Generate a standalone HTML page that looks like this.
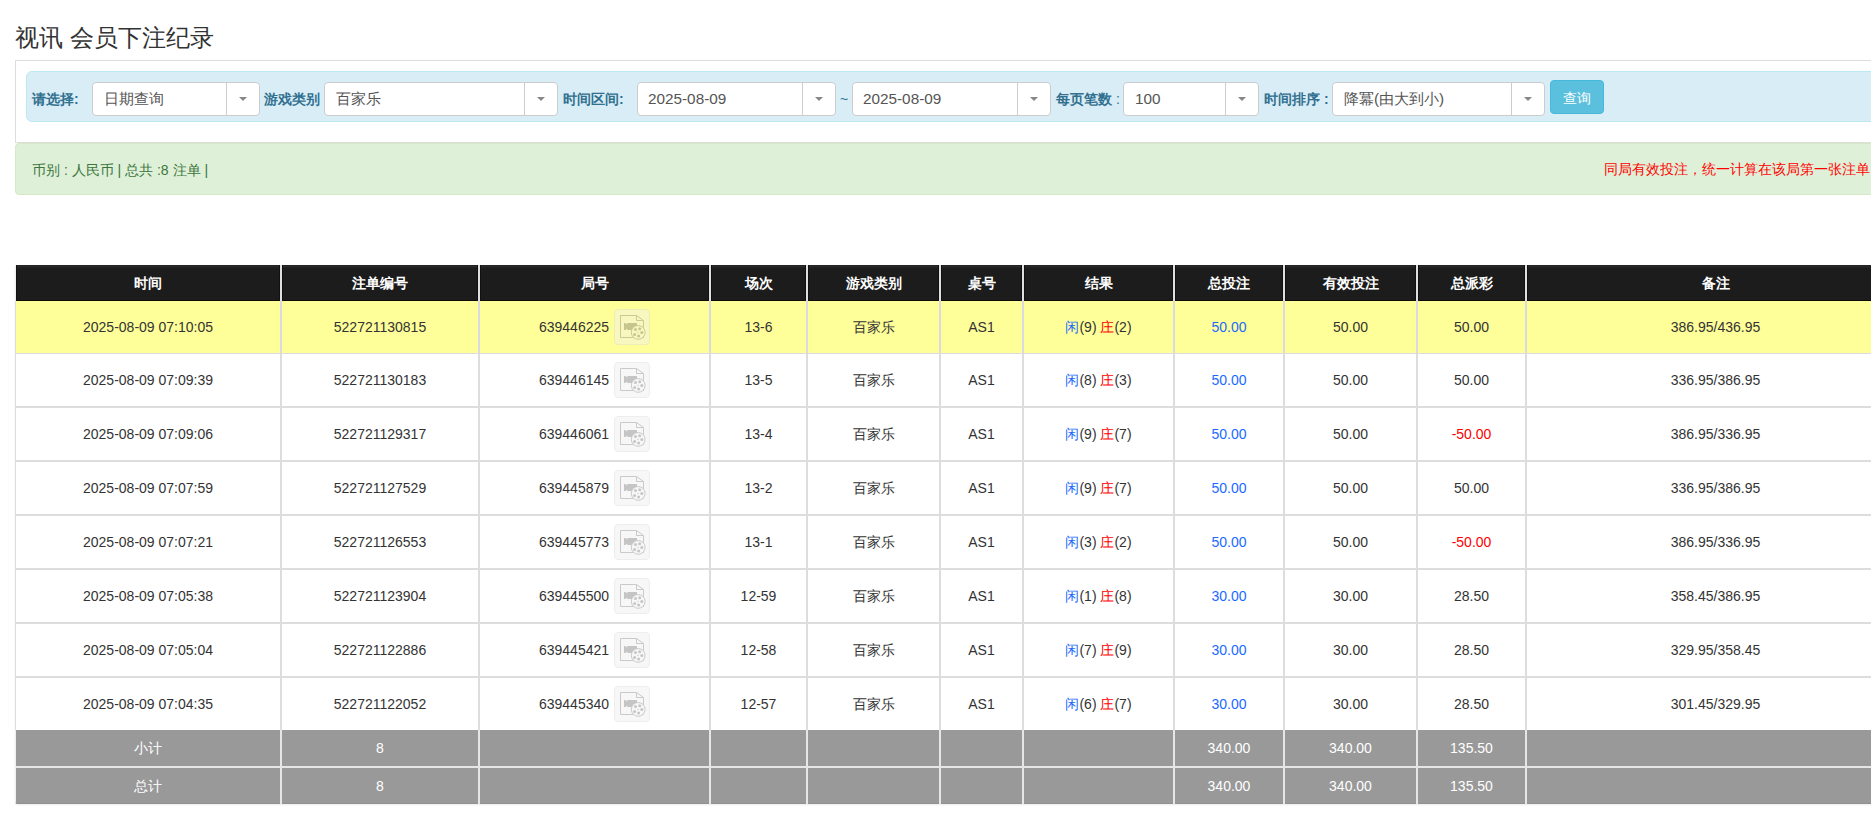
<!DOCTYPE html>
<html><head><meta charset="utf-8">
<style>
*{box-sizing:border-box;margin:0;padding:0}
html,body{width:1871px;height:822px;overflow:hidden;background:#fff}
body{font-family:"Liberation Sans",sans-serif;font-size:14px;color:#333;position:relative}
.abs{position:absolute}
.title{left:15px;top:23px;font-size:24px;line-height:30px;color:#333;white-space:nowrap}
.panel{left:15px;top:60px;width:1900px;height:83px;border:1px solid #ddd;border-right:none}
.info{left:26px;top:71px;width:1900px;height:51px;background:#d9edf7;border:1px solid #bce8f1;border-radius:6px}
.lbl{position:absolute;top:90px;font-size:14px;line-height:18px;font-weight:bold;color:#31708f;white-space:nowrap}
.lbl i{font-style:normal;font-weight:normal}
.sel{position:absolute;top:82px;height:34px;background:#fff;border:1px solid #ccc;border-radius:4px}
.sel .t{position:absolute;left:11px;top:7px;font-size:15.3px;line-height:18px;color:#555;white-space:nowrap}
.sel .sep{position:absolute;right:32px;top:0;bottom:0;border-left:1px solid #ccc}
.sel .car{position:absolute;right:12px;top:14px;width:0;height:0;border-left:4px solid transparent;border-right:4px solid transparent;border-top:4px solid #888}
.btn{left:1550px;top:80px;width:54px;height:34px;background:#5bc0de;border:1px solid #46b8da;border-radius:4px;color:#fff;font-size:14px;line-height:34px;text-align:center}
.succ{left:15px;top:143px;width:1900px;height:52px;background:#dff0d8;border:1px solid #d6e9c6;border-radius:4px}
.succ .l{position:absolute;left:16px;top:17px;font-size:14px;line-height:18px;color:#3c763d;white-space:nowrap}
.succ .r{position:absolute;left:1588px;top:16px;font-size:14px;line-height:18px;color:#f00;white-space:nowrap}
.tbl{position:absolute;left:15px;top:265px;width:1889px;height:539px;border-radius:0 0 3px 3px;overflow:hidden;background:#fff;box-shadow:0 1px 2px rgba(0,0,0,.08)}
.tbl div{position:absolute}
.hdr{left:0;width:1889px;background:#1c1c1c}
.ybg{left:0;width:1889px;background:#ffff99}
.fbg{left:0;width:1889px;background:#999}
.hl{left:0;width:1889px;background:#ddd}
.vl{width:2px;background:#ddd}
.vlh{width:2px;background:#e0e0e0}
.vly{width:2px;background:#dadae0}
.vlf{width:2px;background:#e6e6e6}
.c{position:absolute;text-align:center;white-space:nowrap;font-size:14px;color:#333}
.th{color:#fff;font-weight:bold}
.ft{color:#fff}
.blue{color:#1a6aff}
.red{color:#f00}
.ico{display:inline-block;vertical-align:middle;width:36px;height:36px;margin-left:5px;border:1px solid #d9d9d9;border-radius:4px;background:#efefef;opacity:.45;position:relative;top:-1px}
.ico svg{position:absolute;left:-1px;top:-1px}
</style></head><body>
<div class="abs title">视讯 会员下注纪录</div>
<div class="abs panel"></div>
<div class="abs info"></div>
<div class="lbl" style="left:32px">请选择:</div>
<div class="sel" style="left:92px;width:168px"><span class="t">日期查询</span><span class="sep"></span><span class="car"></span></div>
<div class="lbl" style="left:264px">游戏类别</div>
<div class="sel" style="left:324px;width:234px"><span class="t">百家乐</span><span class="sep"></span><span class="car"></span></div>
<div class="lbl" style="left:563px">时间区间:</div>
<div class="sel" style="left:637px;width:199px"><span class="t" style="left:10px">2025-08-09</span><span class="sep"></span><span class="car"></span></div>
<div class="lbl" style="left:840px;font-weight:normal">~</div>
<div class="sel" style="left:852px;width:199px"><span class="t" style="left:10px">2025-08-09</span><span class="sep"></span><span class="car"></span></div>
<div class="lbl" style="left:1056px">每页笔数<i> :</i></div>
<div class="sel" style="left:1123px;width:136px"><span class="t" style="left:11px">100</span><span class="sep"></span><span class="car"></span></div>
<div class="lbl" style="left:1264px">时间排序 :</div>
<div class="sel" style="left:1332px;width:213px"><span class="t">降冪(由大到小)</span><span class="sep"></span><span class="car"></span></div>
<div class="abs btn">查询</div>
<div class="abs succ"><span class="l">币别 : 人民币 | 总共 :8 注单 |</span><span class="r">同局有效投注，统一计算在该局第一张注单</span></div>
<div class="tbl">
<div class="hdr" style="top:0;height:36px"></div>
<div style="left:0;top:0;width:1889px;height:3px;background:linear-gradient(#1e1e1e,#2a2a2a 40%,#1e1e1e)"></div>
<div style="left:0;top:35px;width:1889px;height:1px;background:#0c0c0c"></div>
<div style="left:1px;top:0;width:1px;height:36px;background:#111"></div>
<div style="left:0;top:0;width:1px;height:36px;background:#eee"></div>
<div class="ybg" style="top:36px;height:52px"></div>
<div class="hl" style="top:88px;height:1px;background:#dadae0"></div>
<div class="hl" style="top:141px;height:2px"></div>
<div class="hl" style="top:195px;height:2px"></div>
<div class="hl" style="top:249px;height:2px"></div>
<div class="hl" style="top:303px;height:2px"></div>
<div class="hl" style="top:357px;height:2px"></div>
<div class="hl" style="top:411px;height:2px"></div>
<div class="fbg" style="top:465px;height:74px"></div>
<div class="hl" style="top:501px;height:2px;background:#e6e6e6"></div>
<div style="left:0;top:538px;width:1889px;height:1px;background:#909090"></div>
<div style="left:0;top:465px;width:1px;height:74px;background:#eee"></div>
<div class="vl" style="left:0;width:1px;top:36px;height:429px"></div>
<div class="vlh" style="left:265px;top:0;height:36px"></div>
<div style="left:264px;top:0;width:1px;height:36px;background:#111"></div>
<div style="left:267px;top:0;width:1px;height:36px;background:#111"></div>
<div class="vly" style="left:265px;top:36px;height:53px"></div>
<div class="vl" style="left:265px;top:89px;height:376px"></div>
<div class="vlf" style="left:265px;top:465px;height:74px"></div>
<div class="vlh" style="left:463px;top:0;height:36px"></div>
<div style="left:462px;top:0;width:1px;height:36px;background:#111"></div>
<div style="left:465px;top:0;width:1px;height:36px;background:#111"></div>
<div class="vly" style="left:463px;top:36px;height:53px"></div>
<div class="vl" style="left:463px;top:89px;height:376px"></div>
<div class="vlf" style="left:463px;top:465px;height:74px"></div>
<div class="vlh" style="left:694px;top:0;height:36px"></div>
<div style="left:693px;top:0;width:1px;height:36px;background:#111"></div>
<div style="left:696px;top:0;width:1px;height:36px;background:#111"></div>
<div class="vly" style="left:694px;top:36px;height:53px"></div>
<div class="vl" style="left:694px;top:89px;height:376px"></div>
<div class="vlf" style="left:694px;top:465px;height:74px"></div>
<div class="vlh" style="left:791px;top:0;height:36px"></div>
<div style="left:790px;top:0;width:1px;height:36px;background:#111"></div>
<div style="left:793px;top:0;width:1px;height:36px;background:#111"></div>
<div class="vly" style="left:791px;top:36px;height:53px"></div>
<div class="vl" style="left:791px;top:89px;height:376px"></div>
<div class="vlf" style="left:791px;top:465px;height:74px"></div>
<div class="vlh" style="left:924px;top:0;height:36px"></div>
<div style="left:923px;top:0;width:1px;height:36px;background:#111"></div>
<div style="left:926px;top:0;width:1px;height:36px;background:#111"></div>
<div class="vly" style="left:924px;top:36px;height:53px"></div>
<div class="vl" style="left:924px;top:89px;height:376px"></div>
<div class="vlf" style="left:924px;top:465px;height:74px"></div>
<div class="vlh" style="left:1007px;top:0;height:36px"></div>
<div style="left:1006px;top:0;width:1px;height:36px;background:#111"></div>
<div style="left:1009px;top:0;width:1px;height:36px;background:#111"></div>
<div class="vly" style="left:1007px;top:36px;height:53px"></div>
<div class="vl" style="left:1007px;top:89px;height:376px"></div>
<div class="vlf" style="left:1007px;top:465px;height:74px"></div>
<div class="vlh" style="left:1158px;top:0;height:36px"></div>
<div style="left:1157px;top:0;width:1px;height:36px;background:#111"></div>
<div style="left:1160px;top:0;width:1px;height:36px;background:#111"></div>
<div class="vly" style="left:1158px;top:36px;height:53px"></div>
<div class="vl" style="left:1158px;top:89px;height:376px"></div>
<div class="vlf" style="left:1158px;top:465px;height:74px"></div>
<div class="vlh" style="left:1268px;top:0;height:36px"></div>
<div style="left:1267px;top:0;width:1px;height:36px;background:#111"></div>
<div style="left:1270px;top:0;width:1px;height:36px;background:#111"></div>
<div class="vly" style="left:1268px;top:36px;height:53px"></div>
<div class="vl" style="left:1268px;top:89px;height:376px"></div>
<div class="vlf" style="left:1268px;top:465px;height:74px"></div>
<div class="vlh" style="left:1401px;top:0;height:36px"></div>
<div style="left:1400px;top:0;width:1px;height:36px;background:#111"></div>
<div style="left:1403px;top:0;width:1px;height:36px;background:#111"></div>
<div class="vly" style="left:1401px;top:36px;height:53px"></div>
<div class="vl" style="left:1401px;top:89px;height:376px"></div>
<div class="vlf" style="left:1401px;top:465px;height:74px"></div>
<div class="vlh" style="left:1510px;top:0;height:36px"></div>
<div style="left:1509px;top:0;width:1px;height:36px;background:#111"></div>
<div style="left:1512px;top:0;width:1px;height:36px;background:#111"></div>
<div class="vly" style="left:1510px;top:36px;height:53px"></div>
<div class="vl" style="left:1510px;top:89px;height:376px"></div>
<div class="vlf" style="left:1510px;top:465px;height:74px"></div>
</div>
<div class="c th" style="left:16px;width:264px;top:265px;height:36px;line-height:36px">时间</div>
<div class="c th" style="left:282px;width:196px;top:265px;height:36px;line-height:36px">注单编号</div>
<div class="c th" style="left:480px;width:229px;top:265px;height:36px;line-height:36px">局号</div>
<div class="c th" style="left:711px;width:95px;top:265px;height:36px;line-height:36px">场次</div>
<div class="c th" style="left:808px;width:131px;top:265px;height:36px;line-height:36px">游戏类别</div>
<div class="c th" style="left:941px;width:81px;top:265px;height:36px;line-height:36px">桌号</div>
<div class="c th" style="left:1024px;width:149px;top:265px;height:36px;line-height:36px">结果</div>
<div class="c th" style="left:1175px;width:108px;top:265px;height:36px;line-height:36px">总投注</div>
<div class="c th" style="left:1285px;width:131px;top:265px;height:36px;line-height:36px">有效投注</div>
<div class="c th" style="left:1418px;width:107px;top:265px;height:36px;line-height:36px">总派彩</div>
<div class="c th" style="left:1527px;width:377px;top:265px;height:36px;line-height:36px">备注</div>
<div class="c" style="left:16px;width:264px;top:301px;height:52px;line-height:52px">2025-08-09 07:10:05</div>
<div class="c" style="left:282px;width:196px;top:301px;height:52px;line-height:52px">522721130815</div>
<div class="c" style="left:480px;width:229px;top:301px;height:52px;line-height:52px">639446225<span class="ico"><svg width="36" height="36" viewBox="0 0 36 36"><path d="M6.5 6.5H22.5L29.5 11.5V28.5H6.5Z" fill="none" stroke="#8b8b8b"/><path d="M22.5 6.5V11.5H29.5" fill="none" stroke="#8b8b8b"/><path d="M10 14H11.3L13.3 15.6V14H23V21H13.3V19.4L11.3 21H10Z" fill="#7f7f7f"/><circle cx="24.2" cy="23.4" r="6.9" fill="#efefef" stroke="#8b8b8b"/><circle cx="21.5" cy="20.6" r="1.5" fill="#838383"/><circle cx="25.7" cy="19.8" r="1.5" fill="#838383"/><circle cx="27.8" cy="23.6" r="1.5" fill="#838383"/><circle cx="24.6" cy="27" r="1.5" fill="#838383"/><circle cx="20.6" cy="25.4" r="1.5" fill="#838383"/><circle cx="24" cy="23.4" r="0.6" fill="#838383"/></svg></span></div>
<div class="c" style="left:711px;width:95px;top:301px;height:52px;line-height:52px">13-6</div>
<div class="c" style="left:808px;width:131px;top:301px;height:52px;line-height:52px">百家乐</div>
<div class="c" style="left:941px;width:81px;top:301px;height:52px;line-height:52px">AS1</div>
<div class="c" style="left:1024px;width:149px;top:301px;height:52px;line-height:52px"><span class="blue">闲</span>(9) <span class="red">庄</span>(2)</div>
<div class="c" style="left:1175px;width:108px;top:301px;height:52px;line-height:52px"><span class="blue">50.00</span></div>
<div class="c" style="left:1285px;width:131px;top:301px;height:52px;line-height:52px">50.00</div>
<div class="c" style="left:1418px;width:107px;top:301px;height:52px;line-height:52px">50.00</div>
<div class="c" style="left:1527px;width:377px;top:301px;height:52px;line-height:52px">386.95/436.95</div>
<div class="c" style="left:16px;width:264px;top:354px;height:52px;line-height:52px">2025-08-09 07:09:39</div>
<div class="c" style="left:282px;width:196px;top:354px;height:52px;line-height:52px">522721130183</div>
<div class="c" style="left:480px;width:229px;top:354px;height:52px;line-height:52px">639446145<span class="ico"><svg width="36" height="36" viewBox="0 0 36 36"><path d="M6.5 6.5H22.5L29.5 11.5V28.5H6.5Z" fill="none" stroke="#8b8b8b"/><path d="M22.5 6.5V11.5H29.5" fill="none" stroke="#8b8b8b"/><path d="M10 14H11.3L13.3 15.6V14H23V21H13.3V19.4L11.3 21H10Z" fill="#7f7f7f"/><circle cx="24.2" cy="23.4" r="6.9" fill="#efefef" stroke="#8b8b8b"/><circle cx="21.5" cy="20.6" r="1.5" fill="#838383"/><circle cx="25.7" cy="19.8" r="1.5" fill="#838383"/><circle cx="27.8" cy="23.6" r="1.5" fill="#838383"/><circle cx="24.6" cy="27" r="1.5" fill="#838383"/><circle cx="20.6" cy="25.4" r="1.5" fill="#838383"/><circle cx="24" cy="23.4" r="0.6" fill="#838383"/></svg></span></div>
<div class="c" style="left:711px;width:95px;top:354px;height:52px;line-height:52px">13-5</div>
<div class="c" style="left:808px;width:131px;top:354px;height:52px;line-height:52px">百家乐</div>
<div class="c" style="left:941px;width:81px;top:354px;height:52px;line-height:52px">AS1</div>
<div class="c" style="left:1024px;width:149px;top:354px;height:52px;line-height:52px"><span class="blue">闲</span>(8) <span class="red">庄</span>(3)</div>
<div class="c" style="left:1175px;width:108px;top:354px;height:52px;line-height:52px"><span class="blue">50.00</span></div>
<div class="c" style="left:1285px;width:131px;top:354px;height:52px;line-height:52px">50.00</div>
<div class="c" style="left:1418px;width:107px;top:354px;height:52px;line-height:52px">50.00</div>
<div class="c" style="left:1527px;width:377px;top:354px;height:52px;line-height:52px">336.95/386.95</div>
<div class="c" style="left:16px;width:264px;top:408px;height:52px;line-height:52px">2025-08-09 07:09:06</div>
<div class="c" style="left:282px;width:196px;top:408px;height:52px;line-height:52px">522721129317</div>
<div class="c" style="left:480px;width:229px;top:408px;height:52px;line-height:52px">639446061<span class="ico"><svg width="36" height="36" viewBox="0 0 36 36"><path d="M6.5 6.5H22.5L29.5 11.5V28.5H6.5Z" fill="none" stroke="#8b8b8b"/><path d="M22.5 6.5V11.5H29.5" fill="none" stroke="#8b8b8b"/><path d="M10 14H11.3L13.3 15.6V14H23V21H13.3V19.4L11.3 21H10Z" fill="#7f7f7f"/><circle cx="24.2" cy="23.4" r="6.9" fill="#efefef" stroke="#8b8b8b"/><circle cx="21.5" cy="20.6" r="1.5" fill="#838383"/><circle cx="25.7" cy="19.8" r="1.5" fill="#838383"/><circle cx="27.8" cy="23.6" r="1.5" fill="#838383"/><circle cx="24.6" cy="27" r="1.5" fill="#838383"/><circle cx="20.6" cy="25.4" r="1.5" fill="#838383"/><circle cx="24" cy="23.4" r="0.6" fill="#838383"/></svg></span></div>
<div class="c" style="left:711px;width:95px;top:408px;height:52px;line-height:52px">13-4</div>
<div class="c" style="left:808px;width:131px;top:408px;height:52px;line-height:52px">百家乐</div>
<div class="c" style="left:941px;width:81px;top:408px;height:52px;line-height:52px">AS1</div>
<div class="c" style="left:1024px;width:149px;top:408px;height:52px;line-height:52px"><span class="blue">闲</span>(9) <span class="red">庄</span>(7)</div>
<div class="c" style="left:1175px;width:108px;top:408px;height:52px;line-height:52px"><span class="blue">50.00</span></div>
<div class="c" style="left:1285px;width:131px;top:408px;height:52px;line-height:52px">50.00</div>
<div class="c" style="left:1418px;width:107px;top:408px;height:52px;line-height:52px"><span class="red">-50.00</span></div>
<div class="c" style="left:1527px;width:377px;top:408px;height:52px;line-height:52px">386.95/336.95</div>
<div class="c" style="left:16px;width:264px;top:462px;height:52px;line-height:52px">2025-08-09 07:07:59</div>
<div class="c" style="left:282px;width:196px;top:462px;height:52px;line-height:52px">522721127529</div>
<div class="c" style="left:480px;width:229px;top:462px;height:52px;line-height:52px">639445879<span class="ico"><svg width="36" height="36" viewBox="0 0 36 36"><path d="M6.5 6.5H22.5L29.5 11.5V28.5H6.5Z" fill="none" stroke="#8b8b8b"/><path d="M22.5 6.5V11.5H29.5" fill="none" stroke="#8b8b8b"/><path d="M10 14H11.3L13.3 15.6V14H23V21H13.3V19.4L11.3 21H10Z" fill="#7f7f7f"/><circle cx="24.2" cy="23.4" r="6.9" fill="#efefef" stroke="#8b8b8b"/><circle cx="21.5" cy="20.6" r="1.5" fill="#838383"/><circle cx="25.7" cy="19.8" r="1.5" fill="#838383"/><circle cx="27.8" cy="23.6" r="1.5" fill="#838383"/><circle cx="24.6" cy="27" r="1.5" fill="#838383"/><circle cx="20.6" cy="25.4" r="1.5" fill="#838383"/><circle cx="24" cy="23.4" r="0.6" fill="#838383"/></svg></span></div>
<div class="c" style="left:711px;width:95px;top:462px;height:52px;line-height:52px">13-2</div>
<div class="c" style="left:808px;width:131px;top:462px;height:52px;line-height:52px">百家乐</div>
<div class="c" style="left:941px;width:81px;top:462px;height:52px;line-height:52px">AS1</div>
<div class="c" style="left:1024px;width:149px;top:462px;height:52px;line-height:52px"><span class="blue">闲</span>(9) <span class="red">庄</span>(7)</div>
<div class="c" style="left:1175px;width:108px;top:462px;height:52px;line-height:52px"><span class="blue">50.00</span></div>
<div class="c" style="left:1285px;width:131px;top:462px;height:52px;line-height:52px">50.00</div>
<div class="c" style="left:1418px;width:107px;top:462px;height:52px;line-height:52px">50.00</div>
<div class="c" style="left:1527px;width:377px;top:462px;height:52px;line-height:52px">336.95/386.95</div>
<div class="c" style="left:16px;width:264px;top:516px;height:52px;line-height:52px">2025-08-09 07:07:21</div>
<div class="c" style="left:282px;width:196px;top:516px;height:52px;line-height:52px">522721126553</div>
<div class="c" style="left:480px;width:229px;top:516px;height:52px;line-height:52px">639445773<span class="ico"><svg width="36" height="36" viewBox="0 0 36 36"><path d="M6.5 6.5H22.5L29.5 11.5V28.5H6.5Z" fill="none" stroke="#8b8b8b"/><path d="M22.5 6.5V11.5H29.5" fill="none" stroke="#8b8b8b"/><path d="M10 14H11.3L13.3 15.6V14H23V21H13.3V19.4L11.3 21H10Z" fill="#7f7f7f"/><circle cx="24.2" cy="23.4" r="6.9" fill="#efefef" stroke="#8b8b8b"/><circle cx="21.5" cy="20.6" r="1.5" fill="#838383"/><circle cx="25.7" cy="19.8" r="1.5" fill="#838383"/><circle cx="27.8" cy="23.6" r="1.5" fill="#838383"/><circle cx="24.6" cy="27" r="1.5" fill="#838383"/><circle cx="20.6" cy="25.4" r="1.5" fill="#838383"/><circle cx="24" cy="23.4" r="0.6" fill="#838383"/></svg></span></div>
<div class="c" style="left:711px;width:95px;top:516px;height:52px;line-height:52px">13-1</div>
<div class="c" style="left:808px;width:131px;top:516px;height:52px;line-height:52px">百家乐</div>
<div class="c" style="left:941px;width:81px;top:516px;height:52px;line-height:52px">AS1</div>
<div class="c" style="left:1024px;width:149px;top:516px;height:52px;line-height:52px"><span class="blue">闲</span>(3) <span class="red">庄</span>(2)</div>
<div class="c" style="left:1175px;width:108px;top:516px;height:52px;line-height:52px"><span class="blue">50.00</span></div>
<div class="c" style="left:1285px;width:131px;top:516px;height:52px;line-height:52px">50.00</div>
<div class="c" style="left:1418px;width:107px;top:516px;height:52px;line-height:52px"><span class="red">-50.00</span></div>
<div class="c" style="left:1527px;width:377px;top:516px;height:52px;line-height:52px">386.95/336.95</div>
<div class="c" style="left:16px;width:264px;top:570px;height:52px;line-height:52px">2025-08-09 07:05:38</div>
<div class="c" style="left:282px;width:196px;top:570px;height:52px;line-height:52px">522721123904</div>
<div class="c" style="left:480px;width:229px;top:570px;height:52px;line-height:52px">639445500<span class="ico"><svg width="36" height="36" viewBox="0 0 36 36"><path d="M6.5 6.5H22.5L29.5 11.5V28.5H6.5Z" fill="none" stroke="#8b8b8b"/><path d="M22.5 6.5V11.5H29.5" fill="none" stroke="#8b8b8b"/><path d="M10 14H11.3L13.3 15.6V14H23V21H13.3V19.4L11.3 21H10Z" fill="#7f7f7f"/><circle cx="24.2" cy="23.4" r="6.9" fill="#efefef" stroke="#8b8b8b"/><circle cx="21.5" cy="20.6" r="1.5" fill="#838383"/><circle cx="25.7" cy="19.8" r="1.5" fill="#838383"/><circle cx="27.8" cy="23.6" r="1.5" fill="#838383"/><circle cx="24.6" cy="27" r="1.5" fill="#838383"/><circle cx="20.6" cy="25.4" r="1.5" fill="#838383"/><circle cx="24" cy="23.4" r="0.6" fill="#838383"/></svg></span></div>
<div class="c" style="left:711px;width:95px;top:570px;height:52px;line-height:52px">12-59</div>
<div class="c" style="left:808px;width:131px;top:570px;height:52px;line-height:52px">百家乐</div>
<div class="c" style="left:941px;width:81px;top:570px;height:52px;line-height:52px">AS1</div>
<div class="c" style="left:1024px;width:149px;top:570px;height:52px;line-height:52px"><span class="blue">闲</span>(1) <span class="red">庄</span>(8)</div>
<div class="c" style="left:1175px;width:108px;top:570px;height:52px;line-height:52px"><span class="blue">30.00</span></div>
<div class="c" style="left:1285px;width:131px;top:570px;height:52px;line-height:52px">30.00</div>
<div class="c" style="left:1418px;width:107px;top:570px;height:52px;line-height:52px">28.50</div>
<div class="c" style="left:1527px;width:377px;top:570px;height:52px;line-height:52px">358.45/386.95</div>
<div class="c" style="left:16px;width:264px;top:624px;height:52px;line-height:52px">2025-08-09 07:05:04</div>
<div class="c" style="left:282px;width:196px;top:624px;height:52px;line-height:52px">522721122886</div>
<div class="c" style="left:480px;width:229px;top:624px;height:52px;line-height:52px">639445421<span class="ico"><svg width="36" height="36" viewBox="0 0 36 36"><path d="M6.5 6.5H22.5L29.5 11.5V28.5H6.5Z" fill="none" stroke="#8b8b8b"/><path d="M22.5 6.5V11.5H29.5" fill="none" stroke="#8b8b8b"/><path d="M10 14H11.3L13.3 15.6V14H23V21H13.3V19.4L11.3 21H10Z" fill="#7f7f7f"/><circle cx="24.2" cy="23.4" r="6.9" fill="#efefef" stroke="#8b8b8b"/><circle cx="21.5" cy="20.6" r="1.5" fill="#838383"/><circle cx="25.7" cy="19.8" r="1.5" fill="#838383"/><circle cx="27.8" cy="23.6" r="1.5" fill="#838383"/><circle cx="24.6" cy="27" r="1.5" fill="#838383"/><circle cx="20.6" cy="25.4" r="1.5" fill="#838383"/><circle cx="24" cy="23.4" r="0.6" fill="#838383"/></svg></span></div>
<div class="c" style="left:711px;width:95px;top:624px;height:52px;line-height:52px">12-58</div>
<div class="c" style="left:808px;width:131px;top:624px;height:52px;line-height:52px">百家乐</div>
<div class="c" style="left:941px;width:81px;top:624px;height:52px;line-height:52px">AS1</div>
<div class="c" style="left:1024px;width:149px;top:624px;height:52px;line-height:52px"><span class="blue">闲</span>(7) <span class="red">庄</span>(9)</div>
<div class="c" style="left:1175px;width:108px;top:624px;height:52px;line-height:52px"><span class="blue">30.00</span></div>
<div class="c" style="left:1285px;width:131px;top:624px;height:52px;line-height:52px">30.00</div>
<div class="c" style="left:1418px;width:107px;top:624px;height:52px;line-height:52px">28.50</div>
<div class="c" style="left:1527px;width:377px;top:624px;height:52px;line-height:52px">329.95/358.45</div>
<div class="c" style="left:16px;width:264px;top:678px;height:52px;line-height:52px">2025-08-09 07:04:35</div>
<div class="c" style="left:282px;width:196px;top:678px;height:52px;line-height:52px">522721122052</div>
<div class="c" style="left:480px;width:229px;top:678px;height:52px;line-height:52px">639445340<span class="ico"><svg width="36" height="36" viewBox="0 0 36 36"><path d="M6.5 6.5H22.5L29.5 11.5V28.5H6.5Z" fill="none" stroke="#8b8b8b"/><path d="M22.5 6.5V11.5H29.5" fill="none" stroke="#8b8b8b"/><path d="M10 14H11.3L13.3 15.6V14H23V21H13.3V19.4L11.3 21H10Z" fill="#7f7f7f"/><circle cx="24.2" cy="23.4" r="6.9" fill="#efefef" stroke="#8b8b8b"/><circle cx="21.5" cy="20.6" r="1.5" fill="#838383"/><circle cx="25.7" cy="19.8" r="1.5" fill="#838383"/><circle cx="27.8" cy="23.6" r="1.5" fill="#838383"/><circle cx="24.6" cy="27" r="1.5" fill="#838383"/><circle cx="20.6" cy="25.4" r="1.5" fill="#838383"/><circle cx="24" cy="23.4" r="0.6" fill="#838383"/></svg></span></div>
<div class="c" style="left:711px;width:95px;top:678px;height:52px;line-height:52px">12-57</div>
<div class="c" style="left:808px;width:131px;top:678px;height:52px;line-height:52px">百家乐</div>
<div class="c" style="left:941px;width:81px;top:678px;height:52px;line-height:52px">AS1</div>
<div class="c" style="left:1024px;width:149px;top:678px;height:52px;line-height:52px"><span class="blue">闲</span>(6) <span class="red">庄</span>(7)</div>
<div class="c" style="left:1175px;width:108px;top:678px;height:52px;line-height:52px"><span class="blue">30.00</span></div>
<div class="c" style="left:1285px;width:131px;top:678px;height:52px;line-height:52px">30.00</div>
<div class="c" style="left:1418px;width:107px;top:678px;height:52px;line-height:52px">28.50</div>
<div class="c" style="left:1527px;width:377px;top:678px;height:52px;line-height:52px">301.45/329.95</div>
<div class="c ft" style="left:16px;width:264px;top:730px;height:36px;line-height:36px">小计</div>
<div class="c ft" style="left:282px;width:196px;top:730px;height:36px;line-height:36px">8</div>
<div class="c ft" style="left:1175px;width:108px;top:730px;height:36px;line-height:36px">340.00</div>
<div class="c ft" style="left:1285px;width:131px;top:730px;height:36px;line-height:36px">340.00</div>
<div class="c ft" style="left:1418px;width:107px;top:730px;height:36px;line-height:36px">135.50</div>
<div class="c ft" style="left:16px;width:264px;top:768px;height:36px;line-height:36px">总计</div>
<div class="c ft" style="left:282px;width:196px;top:768px;height:36px;line-height:36px">8</div>
<div class="c ft" style="left:1175px;width:108px;top:768px;height:36px;line-height:36px">340.00</div>
<div class="c ft" style="left:1285px;width:131px;top:768px;height:36px;line-height:36px">340.00</div>
<div class="c ft" style="left:1418px;width:107px;top:768px;height:36px;line-height:36px">135.50</div>
</body></html>
